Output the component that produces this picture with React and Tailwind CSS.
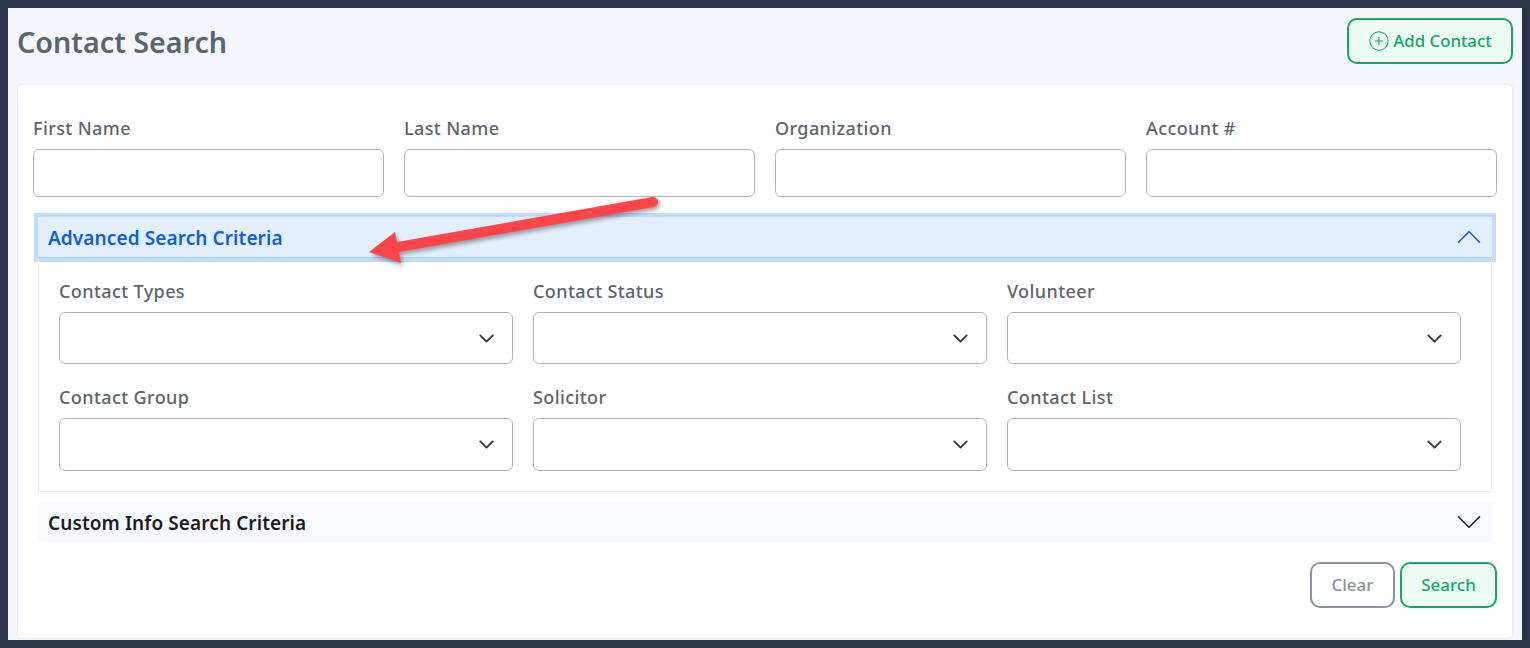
import React from "react";
import { ChevronDown, ChevronUp, CirclePlus } from "lucide-react";

const TOP_FIELDS = ["First Name", "Last Name", "Organization", "Account #"];
const ADVANCED_FIELDS = ["Contact Types", "Contact Status", "Volunteer", "Contact Group", "Solicitor", "Contact List"];

function TextField({ label }) {
  return (
    <div>
      <label className="block text-[18px] font-medium tracking-[0.4px] leading-[26px] mb-[8px] text-[#5b6474]">{label}</label>
      <input className="block w-full h-[48px] bg-white rounded-[6px] border border-[#b0b3ba]" />
    </div>
  );
}

function SelectField({ label, tall }) {
  return (
    <div>
      <label className="block text-[18px] font-medium tracking-[0.4px] leading-[26px] mb-[8px] text-[#5b6474]">{label}</label>
      <div className={`flex items-center justify-end pr-[13px] bg-white rounded-[6px] border border-[#b0b3ba] ${tall ? "h-[53px]" : "h-[52px]"}`}>
        <ChevronDown size={25} strokeWidth={1.8} className="text-[#343a40]" />
      </div>
    </div>
  );
}

// red annotation arrow drawn over the screenshot
function Arrow() {
  return (
    <svg className="absolute left-[360px] top-[190px] drop-shadow-[2px_3px_2px_rgba(0,0,0,0.35)]" width="310" height="85" viewBox="0 0 310 85">
      <path d="M293 12 L38 57" stroke="#ff4548" strokeWidth="10" strokeLinecap="round" />
      <path d="M9 62 L35 42 L41 73 Z" fill="#ff4548" />
    </svg>
  );
}

export default function App() {
  return (
    <div className="relative h-[648px] border-8 border-[#2b364b] bg-[#f5f6ff] px-[10px] font-['Noto_Sans',sans-serif] overflow-hidden">
      <div className="flex items-start justify-between h-[77px] -mr-px">
        <h1 className="-ml-[1px] mt-[13px] text-[28.7px] leading-[42px] font-semibold text-[#5b6474]">Contact Search</h1>
        <button className="flex items-center justify-center gap-[3px] w-[166px] h-[46px] mt-[10px] rounded-[10px] border-2 border-[#16a766] bg-[#ecfbf4] text-[16.8px] font-medium text-[#16a766]">
          <CirclePlus size={22} strokeWidth={1.1} />
          Add Contact
        </button>
      </div>

      <div className="bg-white rounded-[4px] h-[553px] px-[15px] pt-[30px] shadow-[0_0_3px_rgba(0,0,0,0.12)]">
        <div className="grid grid-cols-4 gap-[20px]">
          {TOP_FIELDS.map(f => (
            <TextField key={f} label={f} />
          ))}
        </div>

        <div className="mt-[20px] mx-[5px]">
          <div className="flex items-center justify-between h-[41px] pl-[10px] pr-[2px] bg-[#e4effe] border-b border-[#b3cff7] shadow-[0_0_0_4px_#c0dbfe] text-[#0b5ee8]">
            <span className="pt-[2px] text-[19px] tracking-[0.1px] font-semibold">Advanced Search Criteria</span>
            <ChevronUp size={42} strokeWidth={0.9} className="shrink-0" />
          </div>
          <div className="border border-t-0 border-[#e5e7eb] h-[234px] pl-[20px] pr-[30px] pt-[20px]">
            <div className="grid grid-cols-3 gap-x-[20px] gap-y-[20px]">
              {ADVANCED_FIELDS.map((f, i) => (
                <SelectField key={f} label={f} tall={i > 2} />
              ))}
            </div>
          </div>
          <div className="flex items-center justify-between h-[40px] mt-[10px] pl-[10px] pr-[2px] bg-[#f8f9fe] text-[#1a1d24]">
            <span className="pt-[2px] text-[19px] tracking-[0.1px] font-semibold">Custom Info Search Criteria</span>
            <ChevronDown size={42} strokeWidth={0.9} className="shrink-0" />
          </div>
        </div>

        <div className="flex justify-end gap-[5px] mt-[20px]">
          <button className="w-[85px] h-[46px] rounded-[10px] border-2 border-[#8891a6] bg-white text-[17px] font-medium text-[#8891a6]">Clear</button>
          <button className="w-[97px] h-[46px] rounded-[10px] border-2 border-[#16a766] bg-[#ecfbf4] text-[17px] font-medium text-[#16a766]">Search</button>
        </div>
      </div>

      <div className="absolute -left-[8px] -top-[8px]">
        <Arrow />
      </div>
    </div>
  );
}
